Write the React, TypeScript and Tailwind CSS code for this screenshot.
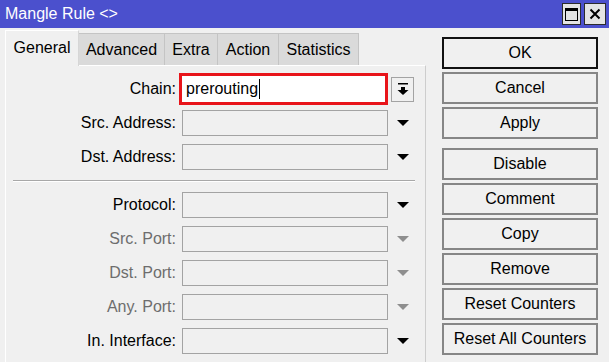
import React from 'react';

const font = { fontFamily: '"Liberation Sans", Arial, sans-serif' };

type Row = { label: string; enabled: boolean };

const topRows: Row[] = [
  { label: 'Src. Address:', enabled: true },
  { label: 'Dst. Address:', enabled: true },
];

// last row is only partly visible at the bottom edge, its label lies below the window
const bottomRows: Row[] = [
  { label: 'Protocol:', enabled: true },
  { label: 'Src. Port:', enabled: false },
  { label: 'Dst. Port:', enabled: false },
  { label: 'Any. Port:', enabled: false },
  { label: 'In. Interface:', enabled: true },
  { label: '', enabled: true },
];

const buttons = [
  'OK',
  'Cancel',
  'Apply',
  'Disable',
  'Comment',
  'Copy',
  'Remove',
  'Reset Counters',
  'Reset All Counters',
];

function Caret({ enabled }: { enabled: boolean }) {
  return (
    <div className="w-[23px] h-[26px] ml-[3px] flex items-center justify-center">
      <svg width="14" height="8" viewBox="0 0 14 8">
        <polygon points="1,1 13,1 7,7" fill={enabled ? '#000' : '#8e8e8e'} />
      </svg>
    </div>
  );
}

function FieldRow({ label, enabled }: Row) {
  return (
    <div className="flex items-center h-[26px]">
      <div className={`w-[170px] text-right text-[16px] ${enabled ? 'text-black' : 'text-[#6d6d6d]'}`}>{label}</div>
      <div className="ml-[6px] w-[206px] h-[26px] border border-[#a3a3a3] bg-[#f0f0f0]" />
      <Caret enabled={enabled} />
    </div>
  );
}

export default function App() {
  return (
    <div className="w-[609px] h-[362px] bg-[#f0f0f0] overflow-hidden" style={font}>
      {/* title bar */}
      <div className="h-[28px] bg-[#4b50cd] flex items-center justify-between pl-[5px] pr-[3px]">
        <span className="text-white text-[16px] leading-none">Mangle Rule &lt;&gt;</span>
        <div className="flex gap-[3px] items-center">
          <div className="w-[19px] h-[22px] bg-[#e4e4e4] border border-[#2b2b2b] flex items-center justify-center">
            <div className="w-[13px] h-[13px] border border-black border-t-[3px]" />
          </div>
          <div className="w-[22px] h-[22px] bg-[#e4e4e4] border border-[#2b2b2b] flex items-center justify-center">
            <svg width="12" height="12" viewBox="0 0 12 12">
              <path d="M1.5 1.5 L10.5 10.5 M10.5 1.5 L1.5 10.5" stroke="#000" strokeWidth="2" />
            </svg>
          </div>
        </div>
      </div>

      <div className="flex">
        {/* left: tabs + panel */}
        <div className="pl-[5px] pt-[2px] w-[426px]">
          <div className="flex items-end h-[35px] text-[16px] relative z-10">
            <div className="w-[74px] h-[36px] mb-[-1px] bg-[#f0f0f0] border-l border-t border-r border-[#d6d6d6] border-l-white border-t-white flex items-center justify-center pb-[2px]">
              General
            </div>
            <div className="w-[86px] h-[32px] bg-[#dadada] border-t border-r border-[#c4c4c4] flex items-center justify-center">Advanced</div>
            <div className="w-[53px] h-[32px] bg-[#dadada] border-t border-r border-[#c4c4c4] flex items-center justify-center">Extra</div>
            <div className="w-[61px] h-[32px] bg-[#dadada] border-t border-r border-[#c4c4c4] flex items-center justify-center">Action</div>
            <div className="w-[80px] h-[32px] bg-[#dadada] border-t border-r border-[#c4c4c4] flex items-center justify-center">Statistics</div>
          </div>
          <div className="h-[300px] border border-[#cdcdcd] border-l-white border-t-white bg-[#f0f0f0] pt-[10px]">
            {/* chain row */}
            <div className="flex items-center h-[26px]">
              <div className="w-[170px] text-right text-[16px]">Chain:</div>
              <div className="ml-[3px] w-[209px] h-[32px] border-[3px] border-[#e8141a] bg-white flex items-center pl-[4px] text-[16px]">
                <span>prerouting</span>
                <span className="w-[1px] h-[20px] bg-black ml-[1px]" />
              </div>
              <div className="ml-[3px] w-[23px] h-[25px] border border-[#a3a3a3] bg-[#f0f0f0] flex items-center justify-center">
                <svg width="12" height="14" viewBox="0 0 12 14">
                  <rect x="1" y="1" width="10" height="1.5" fill="#000" />
                  <rect x="4" y="5" width="4" height="3" fill="#000" />
                  <polygon points="0.5,8 11.5,8 6,13" fill="#000" />
                </svg>
              </div>
            </div>
            <div className="flex flex-col gap-[8px] mt-[8px]">
              {topRows.map((r) => (
                <FieldRow key={r.label} {...r} />
              ))}
            </div>
            <div className="mt-[10px] mb-[10px] ml-[7px] w-[402px] border-t border-[#a8a8a8] border-b border-b-white" />
            <div className="flex flex-col gap-[8px]">
              {bottomRows.map((r, i) => (
                <FieldRow key={i} {...r} />
              ))}
            </div>
          </div>
        </div>

        {/* right: buttons */}
        <div className="ml-[16px] pt-[9px] flex flex-col gap-[3px] w-[156px]">
          {buttons.map((b, i) => (
            <div
              key={b}
              className={`h-[32px] border-2 flex items-center justify-center text-[16px] text-black ${
                i === 0 ? 'border-[#111]' : 'border-[#868686]'
              } ${i === 3 ? 'mt-[6px]' : ''}`}
            >
              {b}
            </div>
          ))}
        </div>
      </div>
    </div>
  );
}
